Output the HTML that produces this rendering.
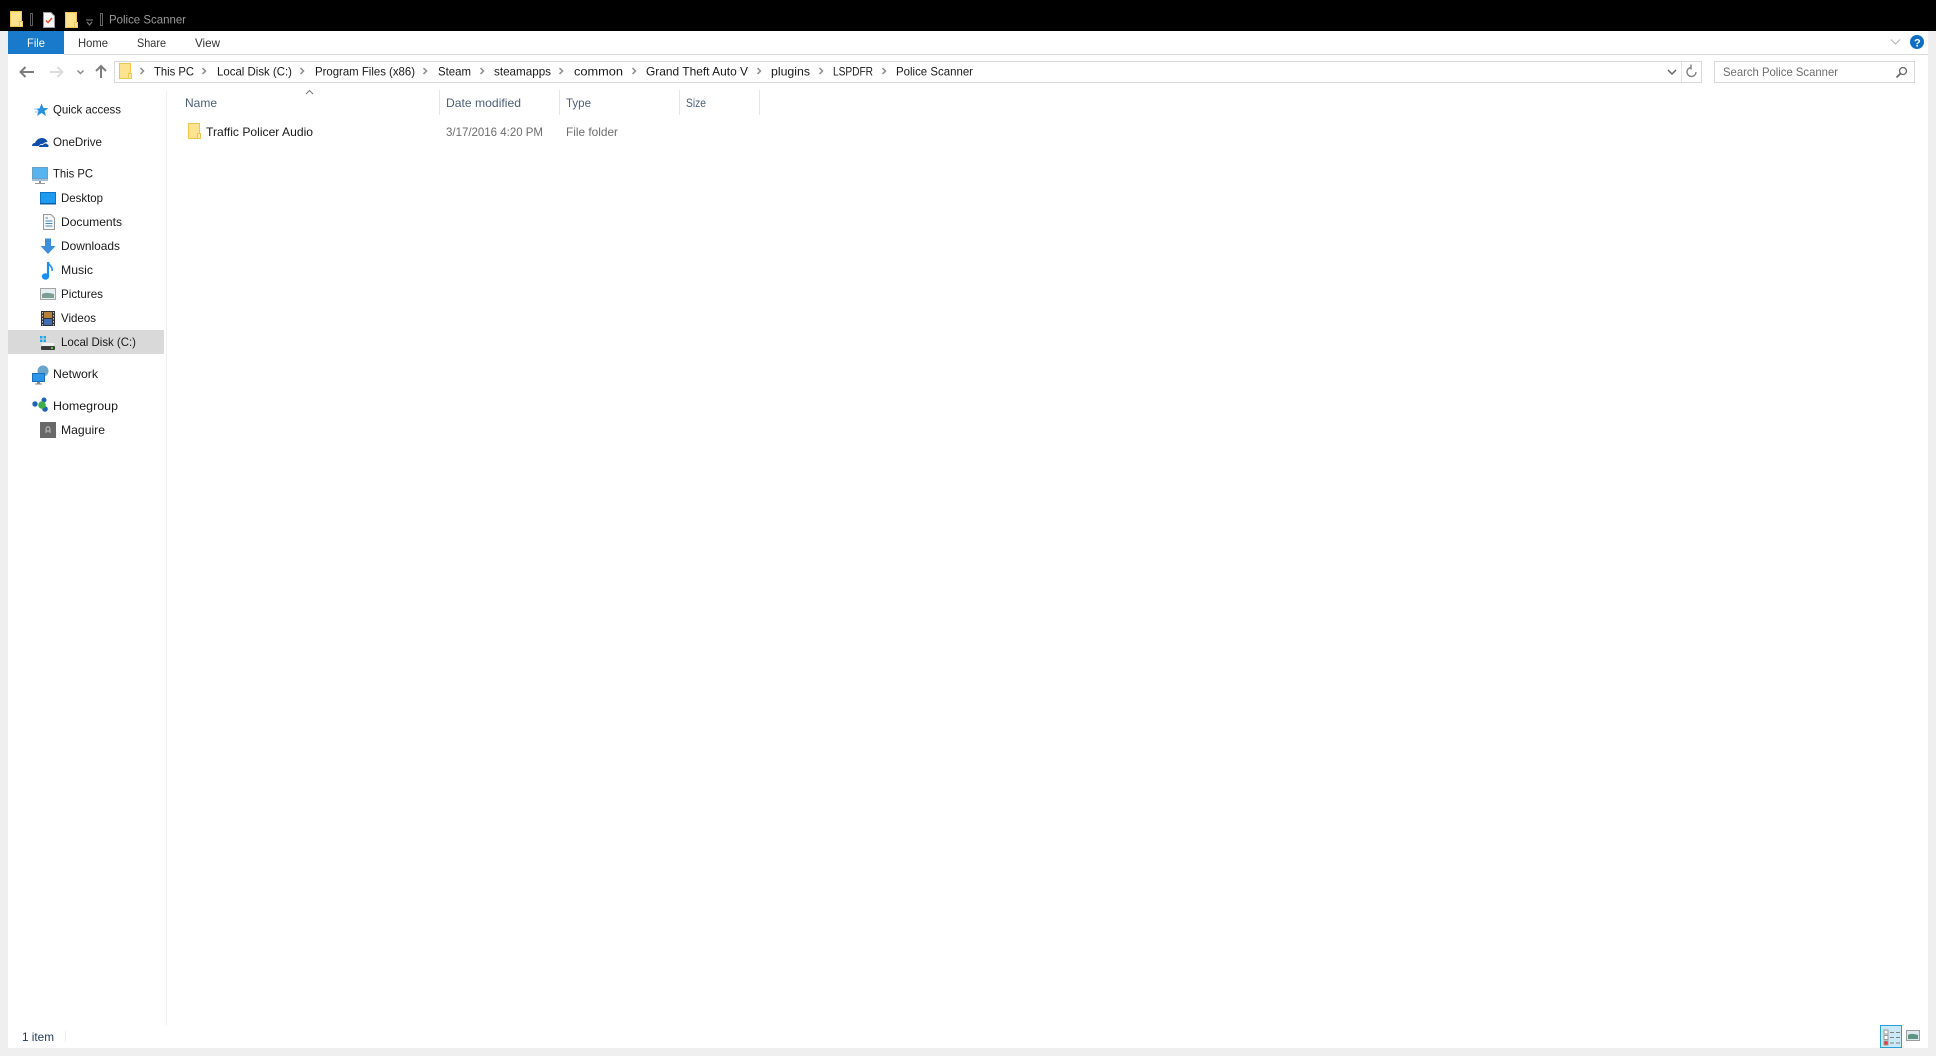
<!DOCTYPE html>
<html><head><meta charset="utf-8"><title>Police Scanner</title>
<style>
html,body{margin:0;padding:0;background:#efefef;overflow:hidden}
svg{display:block}
text{font-family:"Liberation Sans",sans-serif;font-size:12px;fill:#1a1a1a}
.g{fill:#6d6d6d}.h{fill:#4c607a}.r{fill:#333}
</style></head><body>
<svg width="1936" height="1056" viewBox="0 0 1936 1056" xmlns="http://www.w3.org/2000/svg">
<defs>
<g id="fold"><path d="M.5.5H11.5V15.5H.5Z" fill="#fde38f" stroke="#eec64f"/><path d="M9.500 10.500H12.500V15.500H9.500Z" fill="#fde9ad" stroke="#eec64f"/></g>
<path id="chev" d="M0 0L3 3L0 6" fill="none" stroke="#8c8c8c" stroke-width="1.500"/>
</defs>
<rect width="1936" height="1056" fill="#efefef"/>
<rect width="1936" height="31" fill="#000"/>
<rect x="8" y="31" width="1920" height="1017" fill="#fff"/>

<!-- title bar -->
<use href="#fold" x="10" y="11"/>
<rect x="30.500" y="13.500" width="2" height="12" fill="none" stroke="#5a5a5a"/>
<path d="M43.500 12.500H51L54.500 16V27.500H43.500Z" fill="#f7f7f7" stroke="#999"/>
<path d="M46 20.500L48 22.500L52 18" fill="none" stroke="#e8532b" stroke-width="1.500"/>
<use href="#fold" x="65" y="12"/>
<path d="M86 20H93M87 22L89.500 25L92 22" fill="none" stroke="#888"/>
<rect x="100.500" y="13.500" width="2" height="12" fill="none" stroke="#666"/>
<text x="109" y="23.500" textLength="77" lengthAdjust="spacingAndGlyphs" style="fill:#9a9a9a">Police Scanner</text>

<!-- ribbon -->
<rect x="8" y="31" width="56" height="23" fill="#1979ca"/>
<text x="27" y="47" textLength="18" lengthAdjust="spacingAndGlyphs" style="fill:#fff">File</text>
<text x="78" y="47" textLength="30" lengthAdjust="spacingAndGlyphs" class="r">Home</text>
<text x="137" y="47" textLength="29" lengthAdjust="spacingAndGlyphs" class="r">Share</text>
<text x="195" y="47" textLength="25" lengthAdjust="spacingAndGlyphs" class="r">View</text>
<rect x="64" y="54" width="1864" height="1" fill="#dadbdc"/>
<path d="M1891 39.500L1895.500 44L1900 39.500" fill="none" stroke="#b0b0b0"/>
<circle cx="1917" cy="42" r="7" fill="#0f6fc6"/>
<text x="1914" y="46.500" style="fill:#fff;font-weight:bold;font-size:11px">?</text>

<!-- nav buttons -->
<path d="M21 72H34M25.500 67L20.500 72L25.500 77" fill="none" stroke="#7d7d7d" stroke-width="2"/>
<path d="M50 72H62M57.500 67L62.500 72L57.500 77" fill="none" stroke="#dcdcdc" stroke-width="2"/>
<path d="M77.500 70.500L80.500 73.500L83.500 70.500" fill="none" stroke="#8a8a8a" stroke-width="1.500"/>
<path d="M101 78V66M96 71L101 66L106 71" fill="none" stroke="#7d7d7d" stroke-width="2"/>

<!-- address bar -->
<rect x="114.500" y="61.500" width="1587" height="21" fill="#fff" stroke="#d9d9d9"/>
<rect x="1681" y="62" width="1" height="20" fill="#e2e2e2"/>
<use href="#fold" x="119" y="63"/>
<use href="#chev" x="140.500" y="68"/>
<text x="154" y="75.500" textLength="40" lengthAdjust="spacingAndGlyphs">This PC</text>
<use href="#chev" x="202.500" y="68"/>
<text x="217" y="75.500" textLength="75" lengthAdjust="spacingAndGlyphs">Local Disk (C:)</text>
<use href="#chev" x="300.500" y="68"/>
<text x="315" y="75.500" textLength="100" lengthAdjust="spacingAndGlyphs">Program Files (x86)</text>
<use href="#chev" x="423.500" y="68"/>
<text x="438" y="75.500" textLength="33" lengthAdjust="spacingAndGlyphs">Steam</text>
<use href="#chev" x="480.500" y="68"/>
<text x="494" y="75.500" textLength="57" lengthAdjust="spacingAndGlyphs">steamapps</text>
<use href="#chev" x="559.500" y="68"/>
<text x="574" y="75.500" textLength="49" lengthAdjust="spacingAndGlyphs">common</text>
<use href="#chev" x="632.500" y="68"/>
<text x="646" y="75.500" textLength="102" lengthAdjust="spacingAndGlyphs">Grand Theft Auto V</text>
<use href="#chev" x="757.500" y="68"/>
<text x="771" y="75.500" textLength="39" lengthAdjust="spacingAndGlyphs">plugins</text>
<use href="#chev" x="819.500" y="68"/>
<text x="833" y="75.500" textLength="40" lengthAdjust="spacingAndGlyphs">LSPDFR</text>
<use href="#chev" x="882.500" y="68"/>
<text x="896" y="75.500" textLength="77" lengthAdjust="spacingAndGlyphs">Police Scanner</text>
<path d="M1668 70L1672 74L1676 70" fill="none" stroke="#666" stroke-width="1.500"/>
<path d="M1696 72A4.500 4.500 0 1 1 1691 67.500M1691 64.500V69.500" fill="none" stroke="#808080" stroke-width="1.400"/>

<!-- search -->
<rect x="1714.500" y="61.500" width="200" height="21" fill="#fff" stroke="#d9d9d9"/>
<text x="1723" y="76" textLength="115" lengthAdjust="spacingAndGlyphs" class="g">Search Police Scanner</text>
<circle cx="1903" cy="71" r="3.500" fill="none" stroke="#666" stroke-width="1.300"/>
<path d="M1900.500 73.500L1896.500 77.500" stroke="#666" stroke-width="1.800"/>

<!-- separators -->
<rect x="166" y="90" width="1" height="935" fill="#f0f0f0"/>
<rect x="439" y="90" width="1" height="25" fill="#e5e5e5"/>
<rect x="559" y="90" width="1" height="25" fill="#e5e5e5"/>
<rect x="679" y="90" width="1" height="25" fill="#e5e5e5"/>
<rect x="759" y="90" width="1" height="25" fill="#e5e5e5"/>

<!-- headers -->
<path d="M306 94L309.500 90.500L313 94" fill="none" stroke="#777"/>
<text x="185" y="107" textLength="32" lengthAdjust="spacingAndGlyphs" class="h">Name</text>
<text x="446" y="107" textLength="75" lengthAdjust="spacingAndGlyphs" class="h">Date modified</text>
<text x="566" y="107" textLength="25" lengthAdjust="spacingAndGlyphs" class="h">Type</text>
<text x="686" y="107" textLength="20" lengthAdjust="spacingAndGlyphs" class="h">Size</text>

<!-- row -->
<use href="#fold" x="188" y="123"/>
<text x="206" y="136" textLength="107" lengthAdjust="spacingAndGlyphs">Traffic Policer Audio</text>
<text x="446" y="136" textLength="97" lengthAdjust="spacingAndGlyphs" class="g">3/17/2016 4:20 PM</text>
<text x="566" y="136" textLength="52" lengthAdjust="spacingAndGlyphs" class="g">File folder</text>

<!-- nav pane -->
<rect x="8" y="330" width="156" height="24" fill="#d9d9d9"/>
<text x="53" y="113.500" textLength="68" lengthAdjust="spacingAndGlyphs">Quick access</text>
<text x="53" y="146" textLength="49" lengthAdjust="spacingAndGlyphs">OneDrive</text>
<text x="53" y="177.500" textLength="40" lengthAdjust="spacingAndGlyphs">This PC</text>
<text x="61" y="202" textLength="42" lengthAdjust="spacingAndGlyphs">Desktop</text>
<text x="61" y="226" textLength="61" lengthAdjust="spacingAndGlyphs">Documents</text>
<text x="61" y="250" textLength="59" lengthAdjust="spacingAndGlyphs">Downloads</text>
<text x="61" y="274" textLength="32" lengthAdjust="spacingAndGlyphs">Music</text>
<text x="61" y="298" textLength="42" lengthAdjust="spacingAndGlyphs">Pictures</text>
<text x="61" y="322" textLength="35" lengthAdjust="spacingAndGlyphs">Videos</text>
<text x="61" y="346" textLength="75" lengthAdjust="spacingAndGlyphs">Local Disk (C:)</text>
<text x="53" y="378" textLength="45" lengthAdjust="spacingAndGlyphs">Network</text>
<text x="53" y="410" textLength="65" lengthAdjust="spacingAndGlyphs">Homegroup</text>
<text x="61" y="434" textLength="44" lengthAdjust="spacingAndGlyphs">Maguire</text>

<!-- quick access star -->
<path d="M41.500 103.500L43.500 108H48.500L44.500 111L46 116L41.500 113L37 116L38.500 111L35.500 108.500H39.500Z" fill="#2b8fe0"/>
<path d="M34 109H38M35 112H38" stroke="#8cc6f0"/>
<!-- onedrive -->
<path d="M32 146C32 143.500 34 143 35 143C36 140 39 138 42 138C45 138 47 140 47.500 142C46 142 44 142.500 43 144C41 143.500 39.500 144.500 39 146Z" fill="#0f4fa8"/>
<path d="M39 147C39 145 41 144.500 43 145C44 143 47 143 48 145C49 145 48.500 147 48 147Z" fill="#0f4fa8"/>
<!-- this pc -->
<rect x="32.500" y="167.500" width="15" height="11" fill="#58b4ee" stroke="#6a9fc4"/>
<rect x="32" y="179" width="16" height="2" fill="#9fc2da"/>
<rect x="39" y="181" width="2" height="2" fill="#999"/>
<rect x="35" y="183" width="10" height="1" fill="#999"/>
<!-- desktop -->
<rect x="40.500" y="192.500" width="15" height="11" fill="#1e9bf0" stroke="#0d74c6"/>
<rect x="40" y="203" width="16" height="1.500" fill="#0b5fa8"/>
<!-- documents -->
<path d="M43.500 214.500H51L54.500 218V229.500H43.500Z" fill="#f4f6f8" stroke="#999"/>
<path d="M45.500 218H48M45.500 221H52.500M45.500 223.500H52.500M45.500 226H52.500" stroke="#4a8ab8"/>
<!-- downloads -->
<path d="M45 238.500H51V246H55.500L48 254L40.500 246H45Z" fill="#3d8fdb"/>
<!-- music -->
<path d="M48 262V276" stroke="#1a8ff0" stroke-width="2.200" fill="none"/>
<ellipse cx="45.500" cy="276.500" rx="3.700" ry="3.200" fill="#1a8ff0"/>
<path d="M48 262C49 266 53 266 52 271" stroke="#1a8ff0" stroke-width="1.600" fill="none"/>
<!-- pictures -->
<rect x="40.500" y="288.500" width="15" height="11" fill="#e4eef2" stroke="#a4a4a4"/>
<path d="M42 294C46 292 50 293 54 294V298H42Z" fill="#7a9f92"/>
<!-- videos -->
<rect x="41" y="311" width="14" height="15" fill="#333"/>
<rect x="44" y="312" width="8" height="6" fill="#b8803a"/>
<rect x="44" y="319" width="8" height="6" fill="#3d6fb0"/>
<path d="M42.500 312V326M53.500 312V326" stroke="#ccc" stroke-dasharray="1.500 1.500"/>
<!-- local disk -->
<path d="M40 336H42.500V338.500H40ZM43.500 336H46V338.500H43.500ZM40 339.500H42.500V342H40ZM43.500 339.500H46V342H43.500Z" fill="#1ea6e8"/>
<rect x="42" y="343" width="12" height="3" fill="#eef0f2"/>
<rect x="41" y="346" width="14" height="4" rx="1" fill="#3a3a3a"/>
<rect x="51" y="347" width="2" height="2" fill="#52d04f"/>
<!-- network -->
<circle cx="43" cy="371" r="5.500" fill="#6aa4c8"/>
<rect x="32.500" y="373.500" width="12" height="8" fill="#2b96e8" stroke="#1b6fb8"/>
<rect x="37" y="382" width="3" height="1.500" fill="#888"/><rect x="35" y="383.500" width="7" height="1" fill="#888"/>
<!-- homegroup -->
<circle cx="35" cy="404" r="2.700" fill="#1e63b8"/>
<circle cx="44" cy="400" r="2.500" fill="#1e63b8"/>
<circle cx="45" cy="409" r="2.800" fill="#1e63b8"/>
<circle cx="42" cy="405" r="3.800" fill="#3fae49"/>
<!-- maguire -->
<rect x="40" y="422" width="16" height="16" fill="#686868"/>
<path d="M46 433V429C46 426 50 426 50 429V433M46 431H50" fill="none" stroke="#bdbdbd"/>

<!-- status -->
<text x="22" y="1041" textLength="32" lengthAdjust="spacingAndGlyphs" style="fill:#1e395b">1 item</text>
<rect x="65" y="1031" width="1" height="11" fill="#efefef"/>
<rect x="1880.500" y="1025.500" width="21" height="22" fill="#cbe8f6" stroke="#26a0da"/>
<rect x="1884" y="1030" width="4" height="4" fill="#fff" stroke="#999"/>
<rect x="1884" y="1035.500" width="4" height="4" fill="#fff" stroke="#999"/>
<rect x="1884" y="1041" width="4" height="4" fill="#e33" stroke="#999"/>
<path d="M1890 1032.500H1894M1896 1032.500H1900M1890 1037.500H1894M1896 1037.500H1900M1890 1043H1894M1896 1043H1900" stroke="#808080"/>
<rect x="1906.500" y="1030.500" width="13" height="10" fill="#dce9ee" stroke="#9c9c9c"/>
<path d="M1908 1035C1911 1033 1915 1034 1918 1035V1039H1908Z" fill="#5f9384"/>
</svg>
</body></html>
